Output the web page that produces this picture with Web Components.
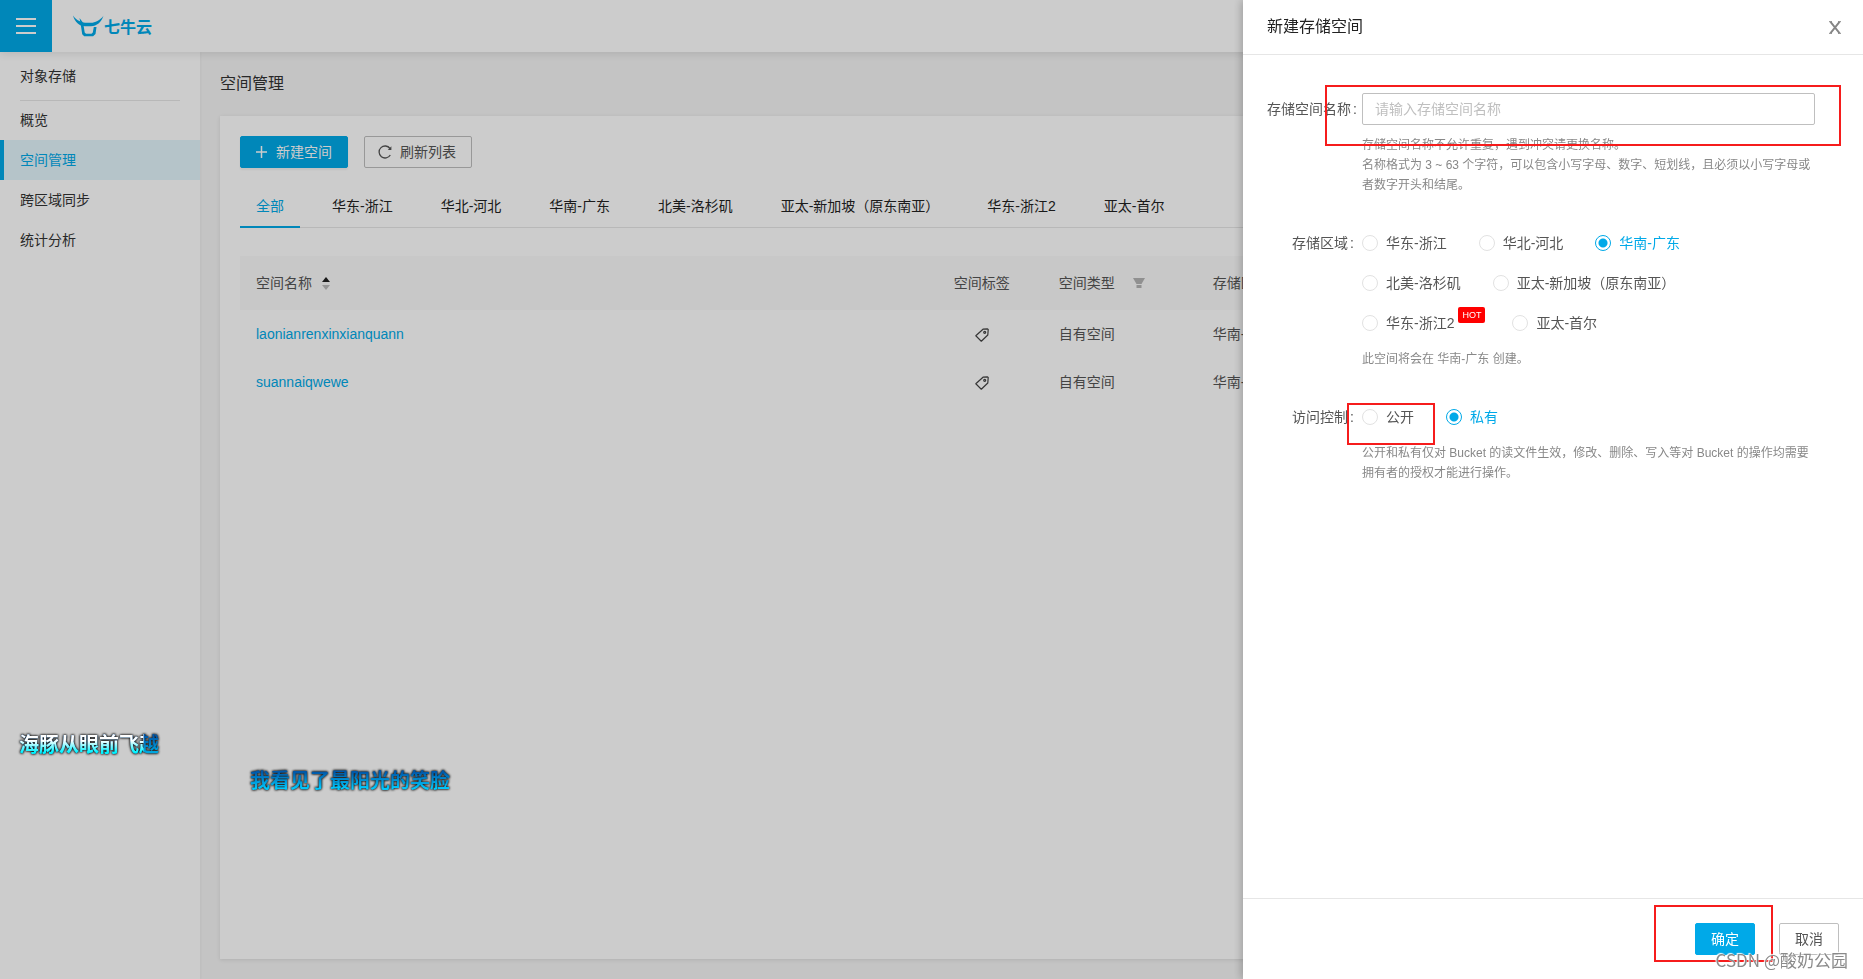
<!DOCTYPE html>
<html lang="zh-CN">
<head>
<meta charset="utf-8">
<title>七牛云 - 空间管理</title>
<style>
  html { --brand: #00a9e8; --line: #e6e6e6; }
  body {
    margin: 0;
    min-height: 100vh;
    background: #f5f5f5;
    color: #333;
    font: 14px/20px "Liberation Sans", "Noto Sans CJK SC", sans-serif;
  }
</style>
</head>
<body>
<bucket-console></bucket-console>

<script>
const define = (name, html, setup) => {
  const template = document.createElement('template');
  template.innerHTML = html;
  customElements.define(name, class extends HTMLElement {
    constructor() {
      super();
      this.attachShadow({ mode: 'open' }).append(template.content.cloneNode(true));
    }
    connectedCallback() { if (setup) setup(this, this.shadowRoot); }
  });
};

/* Button with an optional icon slot */
define('qn-button', `
<style>
  :host { display: block; }
  button {
    display: flex; align-items: center; gap: 8px;
    height: 32px; padding: 0 15px; box-sizing: border-box;
    border: 1px solid #bfbfbf; border-radius: 2px;
    background: #fff; color: #555; font: inherit; white-space: nowrap;
  }
  :host([primary]) button { background: var(--brand); border-color: var(--brand); color: #fff; }
  :host([raised]) button { box-shadow: 0 2px 2px rgba(0, 0, 0, .05); }
</style>
<button type="button"><slot name="icon"></slot><slot></slot></button>`);

/* Hand-drawn highlight frame, sized by whoever places it */
define('mark-frame', `
<style>
  :host { display: block; position: absolute; box-sizing: border-box; border: 2px solid #f61c1c; pointer-events: none; z-index: 2; }
</style>`);

define('top-bar', `
<style>
  :host { display: flex; align-items: center; gap: 20px; height: 52px; background: #fff; box-shadow: 0 2px 8px rgba(0, 0, 0, .1); position: relative; z-index: 1; }
  button { width: 52px; height: 52px; border: 0; padding: 0; background: var(--brand); display: grid; place-items: center; }
  a { display: flex; align-items: center; color: var(--brand); text-decoration: none; font: bold 16px/20px "Noto Sans CJK SC", sans-serif; }
  svg { display: block; }
</style>
<button type="button" aria-label="菜单">
  <svg width="20" height="16" viewBox="0 0 20 16" fill="#fff"><path d="M0 0h20v2H0zM0 7h20v2H0zM0 14h20v2H0z"/></svg>
</button>
<a href="#">
  <svg width="32" height="22" viewBox="0 0 32 22" fill="currentColor"><path d="M1 .5C5 6 10 7.500 13 7.800h6C23 7.500 28 5.500 31.500.7 29 7.500 25 10.800 19 11.300h-6C7 10.800 3 7.500 1 .5Z"/><path d="M7.500 3l3 4 1 3 1.200 7.500 1.300 1.300h5.500l1.300-1.300 1-5.500h2.700l-1 7-2.400 2.200H12.200l-2-2-1.500-10Z"/></svg>
  七牛云
</a>`);

define('side-nav', `
<style>
  :host { display: block; width: 200px; flex: none; background: #fff; box-shadow: 1px 0 2px rgba(0, 0, 0, .04); }
  h2 { margin: 0 20px; line-height: 48px; font-size: 14px; font-weight: normal; box-shadow: 0 1px var(--line); }
  a { display: block; height: 40px; line-height: 40px; padding-left: 20px; color: inherit; text-decoration: none; }
  a[aria-current] { background: #e3f5fc; color: var(--brand); border-left: 4px solid; padding-left: 16px; }
</style>
<h2>对象存储</h2>
<nav>
  <a href="#">概览</a>
  <a href="#" aria-current="page">空间管理</a>
  <a href="#">跨区域同步</a>
  <a href="#">统计分析</a>
</nav>`);

define('region-tabs', `
<style>
  :host { display: flex; gap: 16px; border-bottom: 1px solid var(--line); color: #222; }
  a { padding: 12px 16px; margin-bottom: -1px; color: inherit; text-decoration: none; white-space: nowrap; }
  a[aria-current] { color: var(--brand); box-shadow: inset 0 -2px var(--brand); }
</style>
<a href="#" aria-current="true">全部</a><a href="#">华东-浙江</a><a href="#">华北-河北</a><a href="#">华南-广东</a><a href="#">北美-洛杉矶</a><a href="#">亚太-新加坡（原东南亚）</a><a href="#">华东-浙江2</a><a href="#">亚太-首尔</a>`);

define('tag-icon', `
<style>:host { display: inline-block; vertical-align: middle; } svg { display: block; }</style>
<svg width="14" height="14" viewBox="0 0 14 14" fill="none" stroke="#444" stroke-width="1.200" stroke-linejoin="round"><path d="M8 1.200 12.500.8 13.200 1.500 12.800 7 6.300 13.200.8 7.800Z"/><circle cx="9.700" cy="4.300" r="1"/></svg>`);

define('bucket-table', `
<style>
  :host { display: block; color: #555; }
  table { width: 100%; table-layout: fixed; border-collapse: collapse; }
  th, td { box-sizing: border-box; padding: 0 16px; text-align: left; font-weight: normal; white-space: nowrap; }
  th { height: 54px; background: #fafafa; }
  td { height: 48px; }
  .name { width: 43%; } .tag { width: 122px; } .type { width: 154px; }
  .tag, .tag-cell { text-align: center; }
  a { color: var(--brand); text-decoration: none; }
  .head { display: flex; align-items: center; gap: 10px; }
  .wide { gap: 18px; }
</style>
<table>
  <thead><tr>
    <th class="name" scope="col"><span class="head">空间名称 <svg width="8" height="14" viewBox="0 0 8 14"><path d="M4 1 8 6H0Z" fill="#222"/><path d="M0 9h8l-4 5Z" fill="#bbb"/></svg></span></th>
    <th class="tag" scope="col">空间标签</th>
    <th class="type" scope="col"><span class="head wide">空间类型 <svg width="12" height="10" viewBox="0 0 12 10" fill="#b5b5b5"><path d="M0 0h12L8.500 6h-5ZM3.500 7h5v3h-5Z"/></svg></span></th>
    <th scope="col">存储区域</th>
  </tr></thead>
  <tbody>
    <tr><td><a href="#">laonianrenxinxianquann</a></td><td class="tag-cell"><tag-icon></tag-icon></td><td>自有空间</td><td>华南-广东</td></tr>
    <tr><td><a href="#">suannaiqwewe</a></td><td class="tag-cell"><tag-icon></tag-icon></td><td>自有空间</td><td>华南-广东</td></tr>
  </tbody>
</table>`);

define('bucket-page', `
<style>
  :host { display: flex; flex-direction: column; flex: 1; min-width: 0; padding: 0 20px 20px; }
  h1 { margin: 20px 0; font-size: 16px; line-height: 24px; font-weight: normal; }
  section { flex: 1; background: #fff; padding: 20px; box-shadow: 0 1px 4px rgba(0, 0, 0, .1); }
  .actions { display: flex; gap: 16px; margin-bottom: 16px; }
  .actions svg { overflow: visible; }
  bucket-table { margin-top: 28px; }
</style>
<h1>空间管理</h1>
<section>
  <div class="actions">
    <qn-button primary raised>
      <svg slot="icon" width="12" height="12" viewBox="0 0 12 12" stroke="#fff" stroke-width="1.500"><path d="M5.500 0v12M0 6h11"/></svg>新建空间
    </qn-button>
    <qn-button>
      <svg slot="icon" width="12" height="14" viewBox="2 0 12 14" fill="none" stroke="#555" stroke-width="1.300"><path d="M12.300 10A6 6 0 1 1 12 3.500"/><path d="M13.400 1.300v3.600H9.800Z" fill="#555" stroke="none"/></svg>刷新列表
    </qn-button>
  </div>
  <region-tabs></region-tabs>
  <bucket-table></bucket-table>
</section>`);

/* Label column on the left, control column on the right */
define('form-row', `
<style>
  :host { display: grid; grid-template-columns: 95px minmax(0, 453px); position: relative; line-height: 32px; }
  .label { text-align: right; white-space: nowrap; }
  .label::after { content: ":"; margin: 0 8px 0 2px; }
  .help { font-size: 12px; line-height: 20px; color: #888; display: block; margin-top: 10px; }
</style>
<div class="label"><slot name="label"></slot></div>
<div><slot></slot><div class="help"><slot name="help"></slot></div></div>
<slot name="mark"></slot>`);

define('radio-group', `
<style>
  :host { display: flex; flex-wrap: wrap; row-gap: 8px; }
  label { display: flex; align-items: center; gap: 8px; height: 32px; padding-right: 32px; white-space: nowrap; }
  input { appearance: none; width: 16px; height: 16px; margin: 0; border: 1px solid #e2e2e2; border-radius: 50%; }
  input:checked { border-color: var(--brand); background: radial-gradient(circle, var(--brand) 0 4px, #fff 5px); }
  label:has(:checked) { color: var(--brand); }
  .hot { align-self: flex-start; margin: 0 -5px 0 -4px; padding: 0 4px; border-radius: 2px; background: #f00; color: #fff; font-size: 9px; line-height: 16px; }
</style>`, (host, root) => {
  for (const text of host.getAttribute('options').split('|')) {
    const label = document.createElement('label');
    const input = document.createElement('input');
    input.type = 'radio';
    input.name = host.getAttribute('name');
    input.value = text;
    input.checked = text === host.getAttribute('value');
    label.append(input, text);
    if (text === host.getAttribute('hot')) {
      const badge = document.createElement('span');
      badge.className = 'hot';
      badge.textContent = 'HOT';
      label.append(badge);
    }
    root.append(label);
  }
});

define('create-drawer', `
<style>
  :host { display: flex; flex-direction: column; position: fixed; top: 0; right: 0; bottom: 0; width: 620px; max-width: 100%; background: #fff; color: #555; box-shadow: -2px 0 8px rgba(0, 0, 0, .22); }
  header { display: flex; align-items: center; justify-content: space-between; height: 54px; padding: 0 20px 0 24px; border-bottom: 1px solid var(--line); }
  h2 { margin: 0; font-size: 16px; line-height: 24px; font-weight: normal; color: #222; }
  .close { border: 0; padding: 0; width: 16px; height: 16px; background: none; display: grid; place-items: center; }
  form { flex: 1; padding: 38px 24px; display: flex; flex-direction: column; gap: 32px; overflow: hidden auto; }
  input { display: block; width: 100%; height: 32px; box-sizing: border-box; border: 1px solid #bfbfbf; border-radius: 2px; padding: 0 12px; font: inherit; color: inherit; }
  input::placeholder { color: #bfbfbf; opacity: 1; }
  footer { display: flex; justify-content: flex-end; gap: 24px; padding: 24px; border-top: 1px solid var(--line); position: relative; }
  .m1 { left: 58px; right: -2px; top: -8px; height: 61px; }
  .m2 { left: 80px; width: 88px; top: 2px; height: 42px; }
  .m3 { right: 90px; width: 119px; top: 6px; height: 57px; }
</style>
<header>
  <h2>新建存储空间</h2>
  <button class="close" type="button" aria-label="关闭"><svg width="14" height="13" viewBox="0 0 14 13" stroke="#858585" fill="none"><path d="M2.500.8 11.500 12.200M11.500.8 2.500 12.200" stroke-width="1.900"/><path d="M1 .7h3M10 .7h3M1 12.300h3M10 12.300h3"/></svg></button>
</header>
<form>
  <form-row>
    <label slot="label" for="bucket">存储空间名称</label>
    <input id="bucket" type="text" placeholder="请输入存储空间名称">
    <span slot="help">存储空间名称不允许重复，遇到冲突请更换名称。<br>名称格式为 3 ~ 63 个字符，可以包含小写字母、数字、短划线，且必须以小写字母或者数字开头和结尾。</span>
    <mark-frame slot="mark" class="m1"></mark-frame>
  </form-row>
  <form-row>
    <span slot="label">存储区域</span>
    <radio-group role="radiogroup" aria-label="存储区域" name="region" value="华南-广东" hot="华东-浙江2" options="华东-浙江|华北-河北|华南-广东|北美-洛杉矶|亚太-新加坡（原东南亚）|华东-浙江2|亚太-首尔"></radio-group>
    <span slot="help">此空间将会在 华南-广东 创建。</span>
  </form-row>
  <form-row>
    <span slot="label">访问控制</span>
    <radio-group role="radiogroup" aria-label="访问控制" name="access" value="私有" options="公开|私有"></radio-group>
    <span slot="help">公开和私有仅对 Bucket 的读文件生效，修改、删除、写入等对 Bucket 的操作均需要拥有者的授权才能进行操作。</span>
    <mark-frame slot="mark" class="m2"></mark-frame>
  </form-row>
</form>
<footer>
  <qn-button primary>确定</qn-button>
  <qn-button>取消</qn-button>
  <mark-frame class="m3"></mark-frame>
</footer>`);

/* Floating karaoke lyric line */
define('lyric-line', `
<style>
  :host { display: block; position: fixed; font: bold 20px/28px "Noto Sans CJK SC", sans-serif; white-space: nowrap; filter: drop-shadow(0 0 1px #111) drop-shadow(0 0 1px #444); }
  span { background: linear-gradient(#0057a8 25%, #00c8fc 80%); background-clip: text; -webkit-background-clip: text; color: transparent; }
  :host([sung]) span { background: linear-gradient(#fff 40%, #00f4ff 80%) 0 0 / 89% 100% no-repeat, linear-gradient(#0057a8 25%, #00a8e0 80%); background-clip: text; -webkit-background-clip: text; }
</style>
<span><slot></slot></span>`);

define('water-mark', `
<style>
  :host { display: block; position: fixed; font: 17px/24px "Noto Sans CJK SC", sans-serif; color: #8a8a8a; text-shadow: -1px -1px 1px #fff, 0 0 1px #fff; white-space: nowrap; z-index: 3; }
</style>
<slot></slot>`);

define('bucket-console', `
<style>
  :host { display: flex; flex-direction: column; min-height: 100vh; }
  main { display: flex; flex: 1; }
  .mask { position: fixed; inset: 0; background: rgba(0, 0, 0, .2); z-index: 2; }
  create-drawer, lyric-line { z-index: 2; }
  .first { left: 19px; top: 730px; }
  .second { left: 250px; top: 766px; }
  water-mark { right: 15px; bottom: 7px; }
</style>
<top-bar></top-bar>
<main><side-nav></side-nav><bucket-page></bucket-page></main>
<div class="mask"></div>
<create-drawer></create-drawer>
<lyric-line class="first" sung>海豚从眼前飞越</lyric-line>
<lyric-line class="second">我看见了最阳光的笑脸</lyric-line>
<water-mark>CSDN @酸奶公园</water-mark>`);
</script>
</body>
</html>
